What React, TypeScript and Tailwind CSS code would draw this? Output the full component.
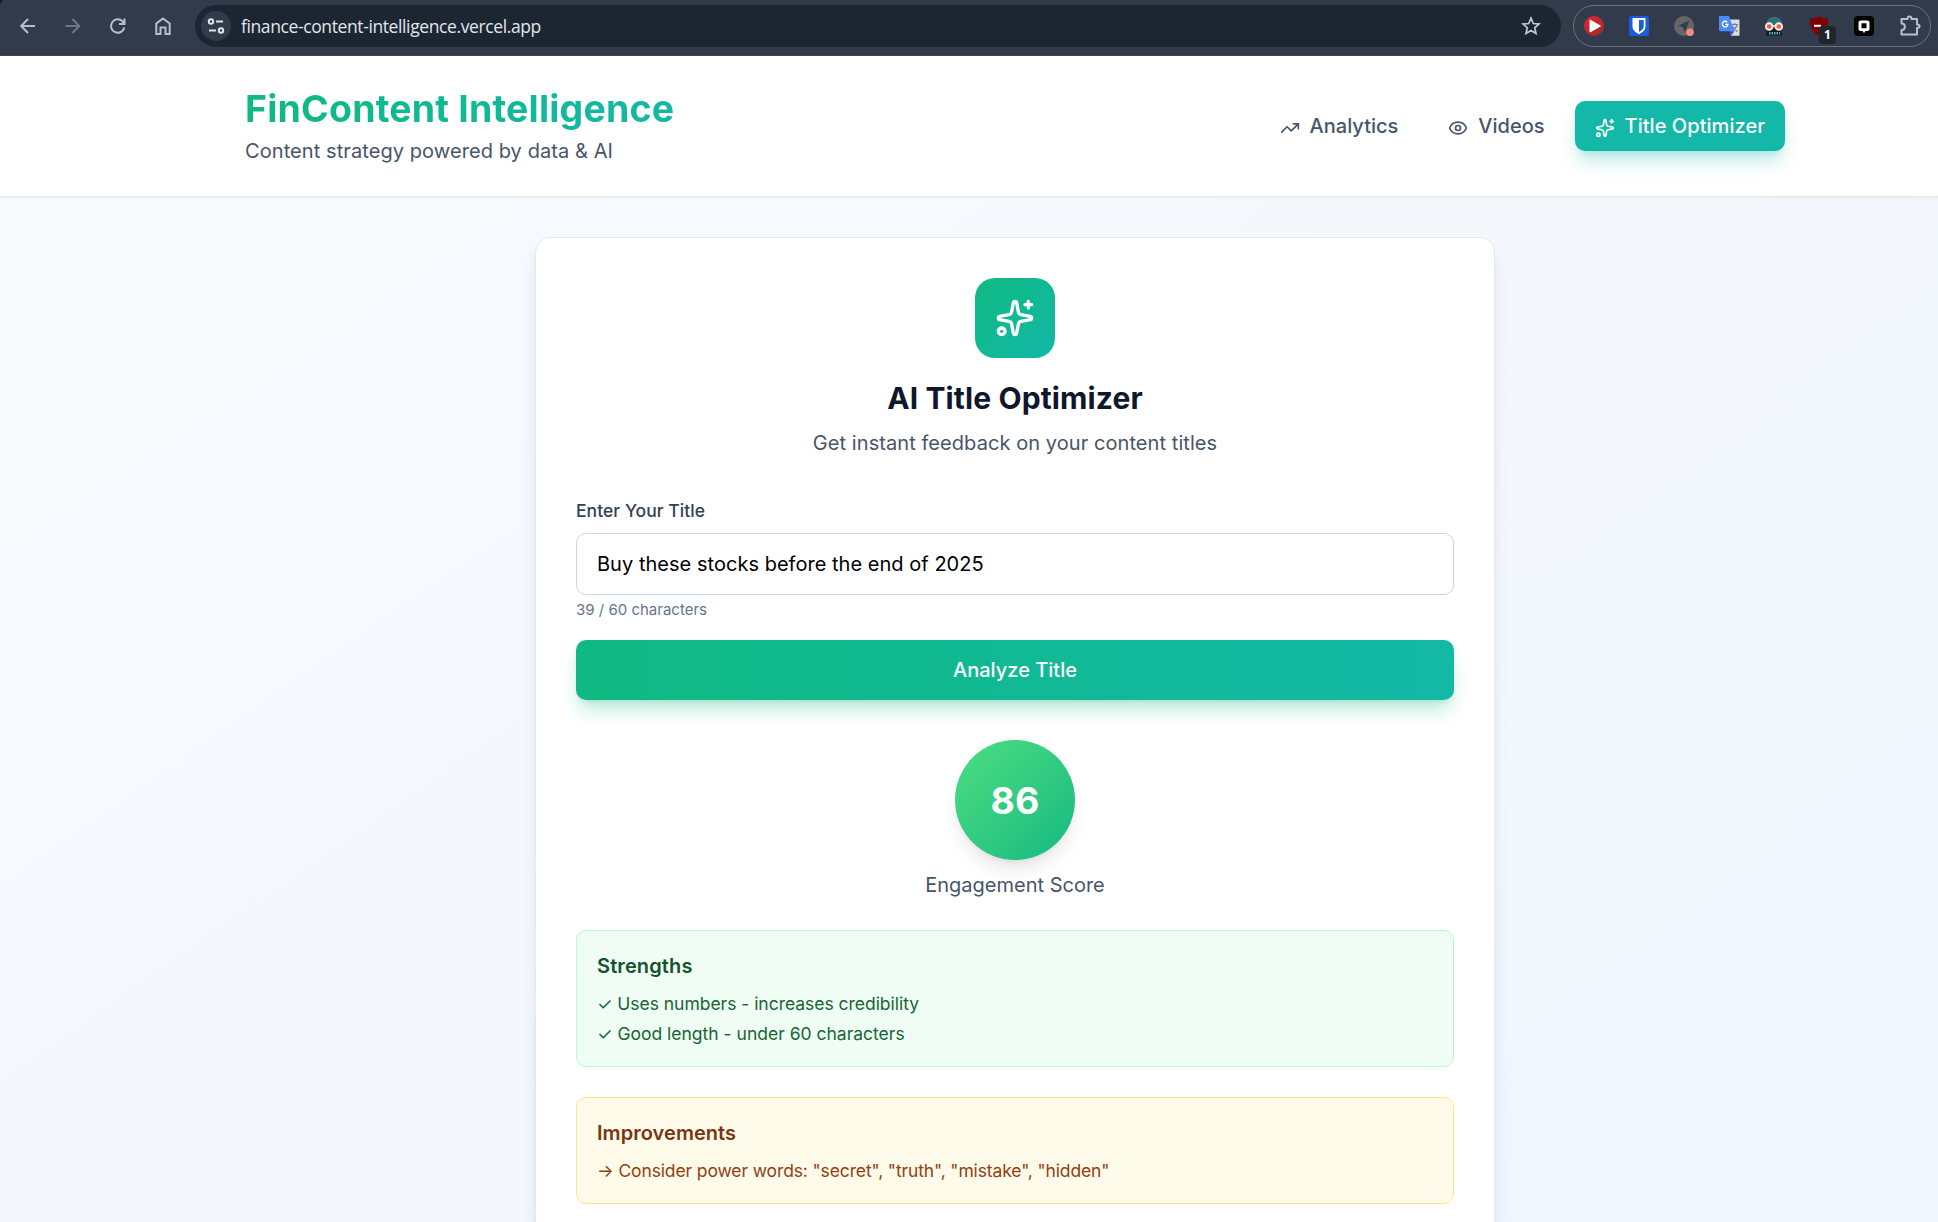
import { Eye, Sparkles, TrendingUp } from "lucide-react";

function Extensions() {
  return (
    <div className="mt-[5px] ml-3 flex h-[42px] w-[358px] items-center gap-[25px] rounded-full border border-[#6d7178] pl-[10px]">
      <svg className="size-5 shrink-0" viewBox="0 0 20 20">
        <defs>
          <linearGradient id="play" x1="0" y1="0" x2="0.6" y2="1">
            <stop offset="0" stopColor="#ea2433" />
            <stop offset="1" stopColor="#a52a2a" />
          </linearGradient>
        </defs>
        <circle cx="10" cy="10" r="10" fill="url(#play)" />
        <path d="M6 4v12l10.500-6z" fill="#fff" stroke="#fff" strokeWidth="1" strokeLinejoin="round" />
      </svg>
      <svg className="size-5 shrink-0" viewBox="0 0 20 20">
        <rect width="20" height="20" rx="2.500" fill="#175ddc" />
        <path d="M3.500 2h13v8.500c0 3.500-2.800 5.800-6.500 7.800-3.700-2-6.500-4.300-6.500-7.800z" fill="#fff" />
        <path d="M10 4h4.700v6.500c0 2.200-1.800 3.900-4.700 5.600z" fill="#175ddc" />
      </svg>
      <svg className="size-5 shrink-0" viewBox="0 0 20 20">
        <circle cx="10" cy="10" r="10" fill="#666" />
        <path d="M15.500 4.500 4 9.800l5 1.500 1.800 4.900z" fill="#313b4b" />
        <circle cx="16" cy="16.300" r="3.800" fill="#f28b82" />
      </svg>
      <svg className="size-5 shrink-0 overflow-visible" viewBox="0 0 20 20">
        <path d="M8 3.500h12.500v16.300H12z" fill="#dcdcdc" />
        <path d="M12.500 8.500h6.500M15.700 7v1.500M18 8.500c-.6 3-2.500 5.500-4.500 6.800M13.800 10.500c1 2 2.500 3.800 4.700 5" stroke="#66808a" strokeWidth="1.200" fill="none" />
        <path d="M0 0h10l5.500 15.300H1.500A1.500 1.500 0 0 1 0 14z" fill="#4a8cf5" />
        <path d="M10.500 15.300h5L12 19.800z" fill="#3b50d6" />
        <path d="M8.300 6.300A2.800 2.800 0 1 0 8.900 8.400H6.300" stroke="#fff" strokeWidth="1.300" fill="none" />
      </svg>
      <svg className="size-5 shrink-0" viewBox="0 0 20 20">
        <path d="M2.500 10C2 4 5.500.8 10.500.8S18.500 4 17.500 10z" fill="#2f7078" />
        <path d="M3 12.500h14l1 7H2z" fill="#15191e" />
        <path d="M5 17.300h11" stroke="#5fb3c9" strokeWidth="2.500" strokeDasharray="1.500 1" />
        <path d="M8 10h4" stroke="#f7ece8" strokeWidth="1.500" />
        <circle cx="5.200" cy="10.500" r="3.300" fill="#e8623f" stroke="#f7ece8" strokeWidth="1.900" />
        <circle cx="14.800" cy="10.500" r="3.300" fill="#e8623f" stroke="#f7ece8" strokeWidth="1.900" />
      </svg>
      <div className="relative size-5 shrink-0">
        <svg className="size-5" viewBox="0 0 20 20">
          <path d="M10 0c2.500 2 5.500 2.600 9 2.600 0 8-1.500 13.200-9 17.400C2.500 15.800 1 10.600 1 2.600 4.500 2.600 7.500 2 10 0z" fill="#800000" />
          <path d="M5 9.800h7" stroke="#fff" strokeWidth="2" />
        </svg>
        <span className="absolute top-[10px] left-[10px] flex h-[18px] w-[17px] items-center justify-center rounded-[4px] bg-[#20252c] font-['Open_Sans'] text-[12px] font-bold text-white">1</span>
      </div>
      <svg className="size-5 shrink-0" viewBox="0 0 20 20">
        <rect width="20" height="20" rx="4" fill="#000" />
        <path d="M6.500 4.500h7a2 2 0 0 1 2 2v6.500a2 2 0 0 1-2 2h-2L10 17l-1.500-2h-2a2 2 0 0 1-2-2V6.500a2 2 0 0 1 2-2z" fill="#fff" />
        <rect x="7.500" y="7.200" width="5" height="5" rx="0.500" fill="#000" />
      </svg>
      <svg className="size-[22px] shrink-0" viewBox="0 0 22 22" fill="none" stroke="#b5bfd0" strokeWidth="2" strokeLinejoin="round">
        <path d="M2.500 4H8.500C8.500 .8 12.500 .8 12.500 4H18V9.500C21.400 9.500 21.400 13 18 13V19.500H2.500V15C7 15 7 8.500 2.500 8.500Z" />
      </svg>
    </div>
  );
}

function BrowserBar() {
  return (
    <div className="relative flex h-14 items-start bg-[#313b4b] shadow-[inset_0_-1px_0_#41464d]">
      <svg className="absolute top-0 left-0 size-1.5" viewBox="0 0 6 6"><path d="M0 0h3Q.5 2 0 6z" fill="#111821" /></svg>
      <div className="flex h-[51px] w-[195px] shrink-0 items-center gap-[23px] pl-[17px]">
        <svg width="22" height="22" viewBox="0 0 22 22" fill="none" stroke="#b5bfd0" strokeWidth="2"><path d="M18 11H4.500M11 4l-6.800 7 6.800 7" /></svg>
        <svg width="22" height="22" viewBox="0 0 22 22" fill="none" stroke="#6f7785" strokeWidth="2"><path d="M3.500 11h13.500M10.500 4l6.800 7-6.800 7" /></svg>
        <svg width="22" height="22" viewBox="0 0 22 22" fill="none" stroke="#b5bfd0" strokeWidth="2"><path d="M17.300 12.500A6.700 6.700 0 1 1 15.500 6.300L17.500 8.500M17.500 3.500V9H12" /></svg>
        <svg width="22" height="22" viewBox="0 0 22 22" fill="none" stroke="#b5bfd0" strokeWidth="2"><path d="M4.300 19V8.500L11 3.500l6.700 5V19h-4.200v-6.500h-5V19z" /></svg>
      </div>
      <div className="mt-[5px] flex h-[42px] w-[1366px] shrink-0 items-center rounded-full bg-[#1c2633] pr-[20px] pl-[6px]">
        <span className="flex size-[30px] items-center justify-center rounded-full bg-[#313b4b]">
          <svg width="18" height="18" viewBox="0 0 18 18" fill="none" stroke="#dfe3e8" strokeWidth="2"><circle cx="4" cy="4.500" r="2.200" /><path d="M9 4.500h7M2 13.500h7" /><circle cx="14" cy="13.500" r="2.200" /></svg>
        </span>
        <span className="ml-[10px] flex-1 font-['Open_Sans'] text-[17.500px] tracking-[-0.39px] text-[#e2e5ea]">finance-content-intelligence.vercel.app</span>
        <svg width="20" height="20" viewBox="0 0 20 20" fill="none" stroke="#c3c8d0" strokeWidth="1.700"><path d="m10 2.200 2.300 5.300 5.700.5-4.300 3.800 1.300 5.600-5-3-5 3 1.300-5.600L2 8l5.700-.5z" /></svg>
      </div>
      <Extensions />
    </div>
  );
}

function NavItem({ icon: Icon, label, active }: { icon: typeof Eye; label: string; active?: boolean }) {
  return (
    <button
      className={
        active
          ? "rounded-[10px] bg-[#14b8a8] px-5 py-2.5 font-medium tracking-[0.05px] text-white shadow-[0_12.5px_18.75px_-3.75px_rgba(20,184,166,0.3),0_5px_7.5px_-5px_rgba(20,184,166,0.3)]"
          : "rounded-[10px] px-5 py-2.5 font-medium text-[#475569]"
      }
    >
      <Icon className="mr-2.5 inline size-5" />
      {label}
    </button>
  );
}

export default function App() {
  return (
    <div className="h-[1222px] w-[1938px] overflow-hidden font-[Inter] text-[20px] leading-[30px]">
      <BrowserBar />
      <div className="min-h-[1400px] w-[2030px] bg-linear-to-br from-[#f8fafc] to-[#eff6ff]">
        <header className="border-b border-[#e2e8f0] bg-white shadow-[0_1.25px_2.5px_rgba(0,0,0,0.05)]">
          <div className="mx-auto flex max-w-[1600px] items-center justify-between px-[30px] py-[30px]">
            <div>
              <h1 className="bg-linear-to-r from-[#10b981] to-[#14b8a6] bg-clip-text text-[37.500px] leading-[45px] font-bold tracking-[0.18px] text-transparent">FinContent Intelligence</h1>
              <p className="mt-[5px] tracking-[0.08px] text-[#475569]">Content strategy powered by data &amp; AI</p>
            </div>
            <nav className="flex gap-2.5">
              <NavItem icon={TrendingUp} label="Analytics" />
              <NavItem icon={Eye} label="Videos" />
              <NavItem icon={Sparkles} label="Title Optimizer" active />
            </nav>
          </div>
        </header>
        <main className="py-10">
          <section className="mx-auto w-[960px] rounded-[15px] border border-[#e2e8f0] bg-white p-10 shadow-[0_12.5px_18.75px_-3.75px_rgba(0,0,0,0.1),0_5px_7.5px_-5px_rgba(0,0,0,0.1)]">
            <div className="mb-10 text-center">
              <div className="mx-auto mb-5 flex size-20 items-center justify-center rounded-[20px] bg-linear-to-br from-[#10b981] to-[#14b8a6] text-white">
                <Sparkles size={40} />
              </div>
              <h2 className="mb-2.5 text-[30px] leading-10 font-bold tracking-[0.11px] text-[#0f172a]">AI Title Optimizer</h2>
              <p className="tracking-[0.07px] text-[#475569]">Get instant feedback on your content titles</p>
            </div>
            <label htmlFor="title" className="mb-2.5 block text-[17.500px] leading-[25px] font-medium tracking-[0.05px] text-[#334155]">Enter Your Title</label>
            <input id="title" className="block h-[62px] w-full rounded-[10px] border border-[#cbd5e1] px-5 tracking-[0.03px] text-black" defaultValue="Buy these stocks before the end of 2025" />
            <p className="mt-[5px] text-[15px] leading-5 text-[#64748b]">39 / 60 characters</p>
            <button className="mt-5 w-full rounded-[10px] bg-linear-to-r from-[#10b981] to-[#14b8a6] py-[15px] font-medium text-white shadow-[0_12.5px_18.75px_-3.75px_rgba(16,185,129,0.3),0_5px_7.5px_-5px_rgba(16,185,129,0.3)]">Analyze Title</button>
            <div className="mt-10 text-center">
              <div className="mx-auto flex size-[120px] items-center justify-center rounded-full bg-linear-to-br from-[#4ade80] to-[#10b981] pt-px text-[37.500px] font-bold text-white shadow-[0_12.5px_18.75px_-3.75px_rgba(0,0,0,0.1),0_5px_7.5px_-5px_rgba(0,0,0,0.1)]">86</div>
              <p className="mt-2.5 text-[#475569]">Engagement Score</p>
            </div>
            <div className="mt-[30px] rounded-[10px] border border-[#bbf7d0] bg-[#f0fdf4] p-5">
              <h3 className="mb-2.5 font-semibold tracking-[0.12px] text-[#14532d]">Strengths</h3>
              <ul className="space-y-[5px] text-[17.500px] leading-[25px] text-[#166534]">
                <li className="tracking-[-0.03px]">✓ Uses numbers - increases credibility</li>
                <li>✓ Good length - under 60 characters</li>
              </ul>
            </div>
            <div className="mt-[30px] rounded-[10px] border border-[#fde68a] bg-[#fffbeb] p-5">
              <h3 className="mb-2.5 font-semibold tracking-[0.05px] text-[#78350f]">Improvements</h3>
              <ul className="text-[17.500px] leading-[25px] text-[#92400e]">
                <li className="tracking-[-0.12px]">→ Consider power words: "secret", "truth", "mistake", "hidden"</li>
              </ul>
            </div>
          </section>
        </main>
      </div>
    </div>
  );
}
